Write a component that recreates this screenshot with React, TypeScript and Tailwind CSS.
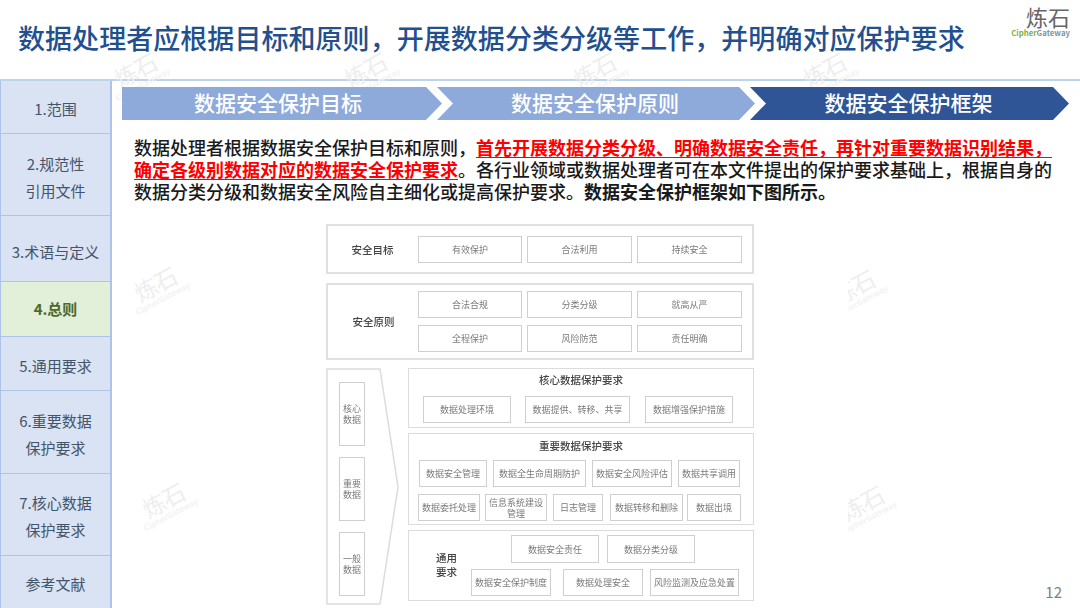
const FONT = "font-['Noto_Sans_CJK_SC','Noto_Sans',sans-serif]";

const navItems = [
  { lines: ["1.范围"], h: "h-[53px] pt-[3px]" },
  { lines: ["2.规范性", "引用文件"], h: "h-[82px] pt-[4px]" },
  { lines: ["3.术语与定义"], h: "h-[66px] pt-[5px]" },
  { lines: ["4.总则"], h: "h-[55px] pb-[2px]", active: true },
  { lines: ["5.通用要求"], h: "h-[54px] pt-[4px]" },
  { lines: ["6.重要数据", "保护要求"], h: "h-[83px] pt-[3px]" },
  { lines: ["7.核心数据", "保护要求"], h: "h-[82px] pt-[2px]" },
  { lines: ["参考文献"], h: "flex-1 pt-[2px]" },
];

function Watermark({ className }: { className: string }) {
  return (
    <div className={`absolute flex w-[70px] -rotate-[28deg] flex-col items-center ${className}`}>
      <span className="text-[23px] leading-[24px] tracking-[-1px] text-[#eeeeee]">炼石</span>
      <span className="text-[8px] leading-[9px] font-semibold whitespace-nowrap text-[#f2f4f2]">CipherGateway</span>
    </div>
  );
}

function Box({ className, children }: { className: string; children: React.ReactNode }) {
  return (
    <div className={`flex items-center justify-center border border-[#cfcfcf] bg-white text-center text-[9px] leading-[11px] text-[#7a7a7a] ${className}`}>
      {children}
    </div>
  );
}

function Heading({ children, className = "" }: { children: React.ReactNode; className?: string }) {
  return <div className={`text-center text-[10.5px] leading-[13px] font-medium text-[#444] ${className}`}>{children}</div>;
}

function Diagram() {
  return (
    <div className="flex w-[428px] flex-col blur-[0.3px]">
      <div className="flex h-[50px] items-center border-2 border-[#e0e0e0] pl-[8px]">
        <Heading className="w-[82px] pr-[9px]">安全目标</Heading>
        <div className="flex gap-[5px]">
          <Box className="h-[27px] w-[104px]">有效保护</Box>
          <Box className="h-[27px] w-[105px]">合法利用</Box>
          <Box className="h-[27px] w-[105px]">持续安全</Box>
        </div>
      </div>

      <div className="mt-[9px] flex h-[77px] items-center border-2 border-[#e0e0e0] pl-[8px]">
        <Heading className="w-[82px] pr-[7px]">安全原则</Heading>
        <div className="grid grid-cols-[104px_105px_105px] gap-x-[5px] gap-y-[7px]">
          <Box className="h-[27px]">合法合规</Box>
          <Box className="h-[27px]">分类分级</Box>
          <Box className="h-[27px]">就高从严</Box>
          <Box className="h-[27px]">全程保护</Box>
          <Box className="h-[27px]">风险防范</Box>
          <Box className="h-[27px]">责任明确</Box>
        </div>
      </div>

      <div className="mt-[8px] flex">
        <div className="relative h-[237px] w-[73px] pt-[14px] pl-[13px]">
          <svg className="absolute top-0 left-0" width="73" height="237" viewBox="0 0 73 237" fill="none">
            <path d="M1 1H54L72 119L54 236H1Z" stroke="#dcdcdc" strokeWidth="1.5" />
          </svg>
          <div className="relative flex w-[26px] flex-col gap-[11px]">
            <Box className="h-[64px] text-[8.5px]">核心<br />数据</Box>
            <Box className="h-[64px] text-[8.5px]">重要<br />数据</Box>
            <Box className="h-[64px] text-[8.5px]">一般<br />数据</Box>
          </div>
        </div>

        <div className="ml-[9px] flex w-[346px] flex-col gap-[5px]">
          <div className="flex h-[60px] flex-col border border-[#dcdcdc] pt-[4px]">
            <Heading>核心数据保护要求</Heading>
            <div className="mt-[10px] flex pl-[14px]">
              <Box className="h-[27px] w-[88px]">数据处理环境</Box>
              <Box className="ml-[14px] h-[27px] w-[105px]">数据提供、转移、共享</Box>
              <Box className="ml-[15px] h-[27px] w-[88px]">数据增强保护措施</Box>
            </div>
          </div>

          <div className="flex h-[92px] flex-col border border-[#dcdcdc] pt-[5px]">
            <Heading>重要数据保护要求</Heading>
            <div className="mt-[8px] flex gap-[6px] pl-[10px]">
              <Box className="h-[27px] w-[68px]">数据安全管理</Box>
              <Box className="h-[27px] w-[93px]">数据全生命周期防护</Box>
              <Box className="h-[27px] w-[80px]">数据安全风险评估</Box>
              <Box className="h-[27px] w-[62px]">数据共享调用</Box>
            </div>
            <div className="mt-[7px] flex gap-[5px] pl-[9px]">
              <Box className="h-[27px] w-[62px]">数据委托处理</Box>
              <Box className="h-[27px] w-[62px]">信息系统建设<br />管理</Box>
              <Box className="ml-[1px] h-[27px] w-[50px]">日志管理</Box>
              <Box className="ml-[2px] h-[27px] w-[73px]">数据转移和删除</Box>
              <Box className="-ml-px h-[27px] w-[54px]">数据出境</Box>
            </div>
          </div>

          <div className="flex h-[71px] items-start border border-[#dcdcdc] pt-[4px]">
            <div className="mt-[16px] ml-[27px] w-[22px] text-[10.5px] leading-[14px] font-medium text-[#444]">通用<br />要求</div>
            <div className="flex flex-col">
              <div className="ml-[53px] flex gap-[8px]">
                <Box className="h-[28px] w-[88px]">数据安全责任</Box>
                <Box className="h-[28px] w-[88px]">数据分类分级</Box>
              </div>
              <div className="mt-[6px] ml-[13px] flex">
                <Box className="h-[27px] w-[80px]">数据安全保护制度</Box>
                <Box className="ml-[12px] h-[27px] w-[80px]">数据处理安全</Box>
                <Box className="ml-[7px] h-[27px] w-[89px]">风险监测及应急处置</Box>
              </div>
            </div>
          </div>
        </div>
      </div>
    </div>
  );
}

export default function App() {
  return (
    <div className={`relative flex h-[608px] w-[1080px] flex-col overflow-hidden bg-white ${FONT}`}>
      <header className="flex h-[79px] shrink-0 items-center justify-between pr-[10px] pb-[3px] pl-[18px]">
        <h1 className="text-[27px] leading-[36px] font-medium tracking-[0.05px] whitespace-nowrap text-[#22508f]">
          数据处理者应根据目标和原则，开展数据分类分级等工作，并明确对应保护要求
        </h1>
        <div className="flex flex-col items-end self-start pt-[5px]">
          <span className="text-[22px] leading-[23px] text-[#666666]">炼石</span>
          <span className="text-[7.8px] leading-[10px] font-semibold whitespace-nowrap">
            <span className="text-[#7fae45]">Cipher</span>
            <span className="text-[#7d97a8]">Gateway</span>
          </span>
        </div>
      </header>

      <div className="relative flex min-h-0 flex-1 border-t-2 border-[#bcd3ea]">
        <Watermark className="top-[-24px] left-[102px]" />
        <Watermark className="top-[-24px] left-[332px]" />
        <Watermark className="top-[-24px] left-[561px]" />
        <Watermark className="top-[-24px] left-[791px]" />
        <Watermark className="top-[190px] left-[122px]" />
        <Watermark className="top-[406px] left-[130px]" />
        <Watermark className="top-[193px] left-[820px]" />
        <Watermark className="top-[409px] left-[829px]" />

        <aside className="relative flex w-[112px] shrink-0 flex-col border-r-2 border-l border-[#adc3e8] bg-[#d9e3f3]">
          {navItems.map((item) => (
            <div
              key={item.lines[0]}
              className={`flex flex-col items-center justify-center border-b border-[#adc3e8] text-[15px] leading-[27px] last:border-b-0 ${item.h} ${
                item.active ? "bg-[#e2efd9] font-semibold text-[#4b6a2c]" : "text-[#44546a]"
              }`}
            >
              {item.lines.map((line) => (
                <span key={line}>{line}</span>
              ))}
            </div>
          ))}
        </aside>

        <main className="relative flex min-w-0 flex-1 flex-col pt-[6px]">
          <div className="flex pl-[10px] text-[21px] leading-[30px] font-medium text-white">
            <div className="h-[33px] w-[320px] bg-[#8eaadb] pr-[8px] text-center [clip-path:polygon(0_0,304px_0,320px_50%,304px_100%,0_100%)]">
              数据安全保护目标
            </div>
            <div className="-ml-[5px] h-[33px] w-[318px] bg-[#8eaadb] pr-[2px] text-center [clip-path:polygon(0_0,302px_0,318px_50%,302px_100%,0_100%,16px_50%)]">
              数据安全保护原则
            </div>
            <div className="-ml-[5px] h-[33px] w-[319px] bg-[#2f5597] pr-[2px] text-center [clip-path:polygon(0_0,303px_0,319px_50%,303px_100%,0_100%,16px_50%)]">
              数据安全保护框架
            </div>
          </div>

          <div className="mt-[16px] ml-[22px] text-[18px] leading-[22px] font-medium whitespace-nowrap text-[#1a1a1a]">
            <p>
              数据处理者根据数据安全保护目标和原则，
              <span className="font-bold text-[#ff0000] underline decoration-1 underline-offset-[2px]">
                首先开展数据分类分级、明确数据安全责任，再针对重要数据识别结果，
              </span>
            </p>
            <p>
              <span className="font-bold text-[#ff0000] underline decoration-1 underline-offset-[2px]">
                确定各级别数据对应的数据安全保护要求
              </span>
              。各行业领域或数据处理者可在本文件提出的保护要求基础上，根据自身的
            </p>
            <p>
              数据分类分级和数据安全风险自主细化或提高保护要求。
              <span className="font-bold">数据安全保护框架如下图所示。</span>
            </p>
          </div>

          <div className="ml-[214px] w-[522px] flex-1 bg-white pt-[22px]">
            <Diagram />
          </div>

          <span className="absolute right-[18px] bottom-[6px] text-[15px] leading-[20px] text-[#7f7f7f]">12</span>
        </main>
      </div>
    </div>
  );
}
